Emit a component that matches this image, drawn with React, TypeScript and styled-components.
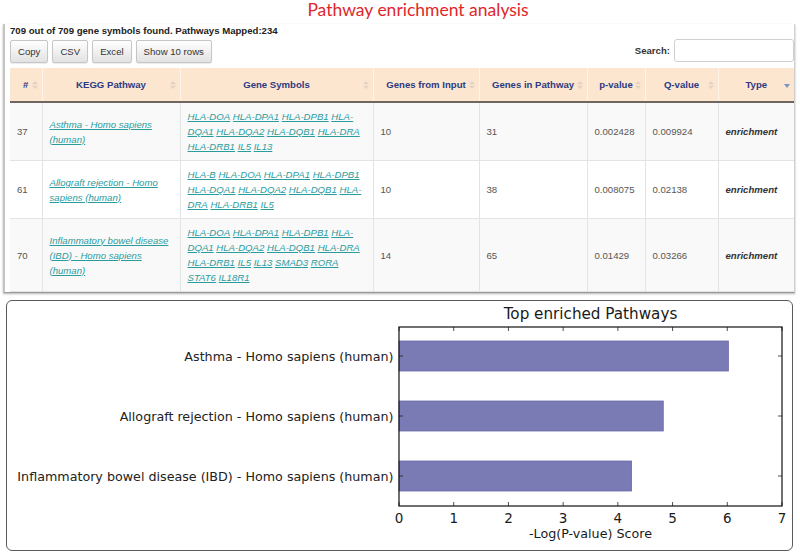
import React from 'react';
import styled, { createGlobalStyle } from 'styled-components';

const GlobalStyle = createGlobalStyle`
  html, body { margin: 0; padding: 0; background: #fff; }
  body {
    font-family: "Liberation Sans", Arial, sans-serif;
    width: 800px;
    height: 554px;
    overflow: hidden;
  }
`;

const Page = styled.div`
  width: 800px;
  height: 554px;
  display: flex;
  flex-direction: column;
`;

const Title = styled.h1`
  margin: 0;
  height: 22px;
  padding-left: 36px;
  text-align: center;
  font-family: Lato, "Open Sans", sans-serif;
  font-weight: 400;
  font-size: 17.5px;
  line-height: 20px;
  color: #e0262a;
`;

const TablePanel = styled.section`
  margin: 2px 5px 0 3px;
  padding: 0 0 0 5px;
  border-left: 2px solid #c4c4c4;
  border-right: 1px solid #d0d0d0;
  border-bottom: 1px solid #9a9a9a;
  box-shadow: 0 1px 2px rgba(0, 0, 0, 0.3);
`;

const Info = styled.div`
  font-size: 9.6px;
  font-weight: bold;
  line-height: 14px;
  color: #222;
`;

const Toolbar = styled.div`
  margin-top: 2px;
  display: flex;
  justify-content: space-between;
  align-items: center;
`;

const ButtonGroup = styled.div`
  display: flex;
  gap: 4px;
`;

const Button = styled.button`
  height: 23px;
  padding: 0 7px;
  font-family: "Liberation Sans", Arial, sans-serif;
  font-size: 9.6px;
  color: #333;
  background: linear-gradient(#ffffff, #e2e2e2);
  border: 1px solid #c6c6c6;
  border-radius: 2px;
  box-shadow: 0 1px 1px rgba(0, 0, 0, 0.08);
`;

const SearchBox = styled.label`
  display: flex;
  align-items: center;
  gap: 4px;
  font-size: 9.6px;
  font-weight: bold;
  color: #333;
  margin-top: -2px;
`;

const SearchInput = styled.input`
  box-sizing: border-box;
  width: 120px;
  height: 23px;
  border: 1px solid #cfcfcf;
  border-radius: 3px;
  background: #fff;
`;

const Table = styled.table`
  margin-top: 5px;
  width: 784px;
  table-layout: fixed;
  border-collapse: collapse;
  font-size: 9.6px;
`;

const Th = styled.th`
  height: 33px;
  padding: 0 3px;
  background: #fce6d0;
  border-left: 1px solid #fff4ea;
  border-right: 1px solid #fff4ea;
  border-bottom: 2px solid #6e665e;
  color: #2d3a82;
  font-weight: bold;
  vertical-align: middle;
  &:first-child { border-left: none; }
  &:last-child { border-right: none; }
`;

const HeadInner = styled.div`
  display: flex;
  align-items: center;
  padding-left: 8px;
`;

const HeadLabel = styled.span`
  flex: 1;
  text-align: center;
  white-space: nowrap;
`;

const SortIcon = styled.svg`
  width: 8px;
  height: 10px;
  flex: none;
`;

const Row = styled.tr<{ $striped: boolean }>`
  background: ${(p) => (p.$striped ? '#f9f9f9' : '#ffffff')};
`;

const Td = styled.td`
  padding: 6px 7px;
  line-height: 15px;
  border: 1px solid #e3e3e3;
  color: #555;
  vertical-align: middle;
  &:first-child { border-left: none; }
  &:last-child { border-right: none; }
`;

const TypeCell = styled(Td)`
  color: #333;
  font-weight: bold;
  font-style: italic;
`;

const Link = styled.a`
  color: #2a9c9e;
  font-style: italic;
  text-decoration: underline;
`;

const ChartBox = styled.section`
  box-sizing: border-box;
  margin: 7px 7px 0 6px;
  height: 251px;
  border: 1px solid #5a5a5a;
  border-radius: 6px;
  overflow: hidden;
`;

const ChartSvg = styled.svg`
  display: block;
  width: 785px;
  height: 249px;
`;

type Sort = 'both' | 'desc';

const SortMark = ({ kind }: { kind: Sort }) =>
  kind === 'both' ? (
    <SortIcon viewBox="0 0 8 10">
      <path d="M4 1 L7 4.2 L1 4.2 Z" fill="#e3d2c2" />
      <path d="M4 9 L7 5.8 L1 5.8 Z" fill="#e3d2c2" />
    </SortIcon>
  ) : (
    <SortIcon viewBox="0 0 8 10">
      <path d="M4 8 L7 4 L1 4 Z" fill="#7d93c6" />
    </SortIcon>
  );

const columns: { label: string; width: number; sort: Sort }[] = [
  { label: '#', width: 32, sort: 'both' },
  { label: 'KEGG Pathway', width: 138, sort: 'both' },
  { label: 'Gene Symbols', width: 193, sort: 'both' },
  { label: 'Genes from Input', width: 106, sort: 'both' },
  { label: 'Genes in Pathway', width: 108, sort: 'both' },
  { label: 'p-value', width: 58, sort: 'both' },
  { label: 'Q-value', width: 73, sort: 'both' },
  { label: 'Type', width: 76, sort: 'desc' },
];

const rows = [
  {
    id: '37',
    pathway: 'Asthma - Homo sapiens (human)',
    genes: ['HLA-DOA', 'HLA-DPA1', 'HLA-DPB1', 'HLA-DQA1', 'HLA-DQA2', 'HLA-DQB1', 'HLA-DRA', 'HLA-DRB1', 'IL5', 'IL13'],
    input: '10',
    inPathway: '31',
    p: '0.002428',
    q: '0.009924',
  },
  {
    id: '61',
    pathway: 'Allograft rejection - Homo sapiens (human)',
    genes: ['HLA-B', 'HLA-DOA', 'HLA-DPA1', 'HLA-DPB1', 'HLA-DQA1', 'HLA-DQA2', 'HLA-DQB1', 'HLA-DRA', 'HLA-DRB1', 'IL5'],
    input: '10',
    inPathway: '38',
    p: '0.008075',
    q: '0.02138',
  },
  {
    id: '70',
    pathway: 'Inflammatory bowel disease (IBD) - Homo sapiens (human)',
    genes: ['HLA-DOA', 'HLA-DPA1', 'HLA-DPB1', 'HLA-DQA1', 'HLA-DQA2', 'HLA-DQB1', 'HLA-DRA', 'HLA-DRB1', 'IL5', 'IL13', 'SMAD3', 'RORA', 'STAT6', 'IL18R1'],
    input: '14',
    inPathway: '65',
    p: '0.01429',
    q: '0.03266',
  },
];

const bars = [
  { label: 'Asthma - Homo sapiens (human)', value: 6.02 },
  { label: 'Allograft rejection - Homo sapiens (human)', value: 4.83 },
  { label: 'Inflammatory bowel disease (IBD) - Homo sapiens (human)', value: 4.25 },
];

const AX = { x: 392, y: 26, w: 383, h: 179 };
const UNIT = AX.w / 7;

const Chart = () => (
  <ChartSvg viewBox="0 0 785 249">
    <text x={583.5} y={18} textAnchor="middle" fontFamily="'DejaVu Sans', sans-serif" fontSize={15.2} fill="#1a1a1a">
      Top enriched Pathways
    </text>
    {bars.map((b, i) => {
      const cy = 55 + i * 60;
      return (
        <g key={b.label}>
          <rect x={AX.x} y={cy - 15} width={b.value * UNIT} height={30} fill="#7a7ab5" stroke="#6a6aa8" strokeWidth={0.8} />
          <line x1={AX.x} x2={AX.x + 4} y1={cy} y2={cy} stroke="#222" strokeWidth={0.8} />
          <line x1={AX.x + AX.w - 4} x2={AX.x + AX.w} y1={cy} y2={cy} stroke="#222" strokeWidth={0.8} />
          <text x={386.5} y={cy + 4.5} textAnchor="end" fontFamily="'DejaVu Sans', sans-serif" fontSize={12.7} fill="#222">
            {b.label}
          </text>
        </g>
      );
    })}
    {[0, 1, 2, 3, 4, 5, 6, 7].map((t) => {
      const x = AX.x + t * UNIT;
      return (
        <g key={t}>
          <line x1={x} x2={x} y1={AX.y} y2={AX.y + 4} stroke="#222" strokeWidth={0.8} />
          <line x1={x} x2={x} y1={AX.y + AX.h - 4} y2={AX.y + AX.h} stroke="#222" strokeWidth={0.8} />
          <text x={x} y={222} textAnchor="middle" fontFamily="'DejaVu Sans', sans-serif" fontSize={13.5} fill="#1a1a1a">
            {t}
          </text>
        </g>
      );
    })}
    <rect x={AX.x} y={AX.y} width={AX.w} height={AX.h} fill="none" stroke="#111" strokeWidth={1.2} />
    <text x={583.5} y={237} textAnchor="middle" fontFamily="'DejaVu Sans', sans-serif" fontSize={12.7} fill="#1a1a1a">
      -Log(P-value) Score
    </text>
  </ChartSvg>
);

export default function App() {
  return (
    <Page>
      <GlobalStyle />
      <Title>Pathway enrichment analysis</Title>
      <TablePanel>
        <Info>709 out of 709 gene symbols found. Pathways Mapped:234</Info>
        <Toolbar>
          <ButtonGroup>
            <Button>Copy</Button>
            <Button>CSV</Button>
            <Button>Excel</Button>
            <Button>Show 10 rows</Button>
          </ButtonGroup>
          <SearchBox>
            Search:
            <SearchInput type="text" />
          </SearchBox>
        </Toolbar>
        <Table>
          <colgroup>
            {columns.map((c) => (
              <col key={c.label} style={{ width: c.width }} />
            ))}
          </colgroup>
          <thead>
            <tr>
              {columns.map((c) => (
                <Th key={c.label}>
                  <HeadInner>
                    <HeadLabel>{c.label}</HeadLabel>
                    <SortMark kind={c.sort} />
                  </HeadInner>
                </Th>
              ))}
            </tr>
          </thead>
          <tbody>
            {rows.map((r, i) => (
              <Row key={r.id} $striped={i % 2 === 0}>
                <Td>{r.id}</Td>
                <Td>
                  <Link href="#">{r.pathway}</Link>
                </Td>
                <Td>
                  {r.genes.map((g, j) => (
                    <React.Fragment key={g}>
                      {j > 0 ? ' ' : ''}
                      <Link href="#">{g}</Link>
                    </React.Fragment>
                  ))}
                </Td>
                <Td>{r.input}</Td>
                <Td>{r.inPathway}</Td>
                <Td>{r.p}</Td>
                <Td>{r.q}</Td>
                <TypeCell>enrichment</TypeCell>
              </Row>
            ))}
          </tbody>
        </Table>
      </TablePanel>
      <ChartBox>
        <Chart />
      </ChartBox>
    </Page>
  );
}
